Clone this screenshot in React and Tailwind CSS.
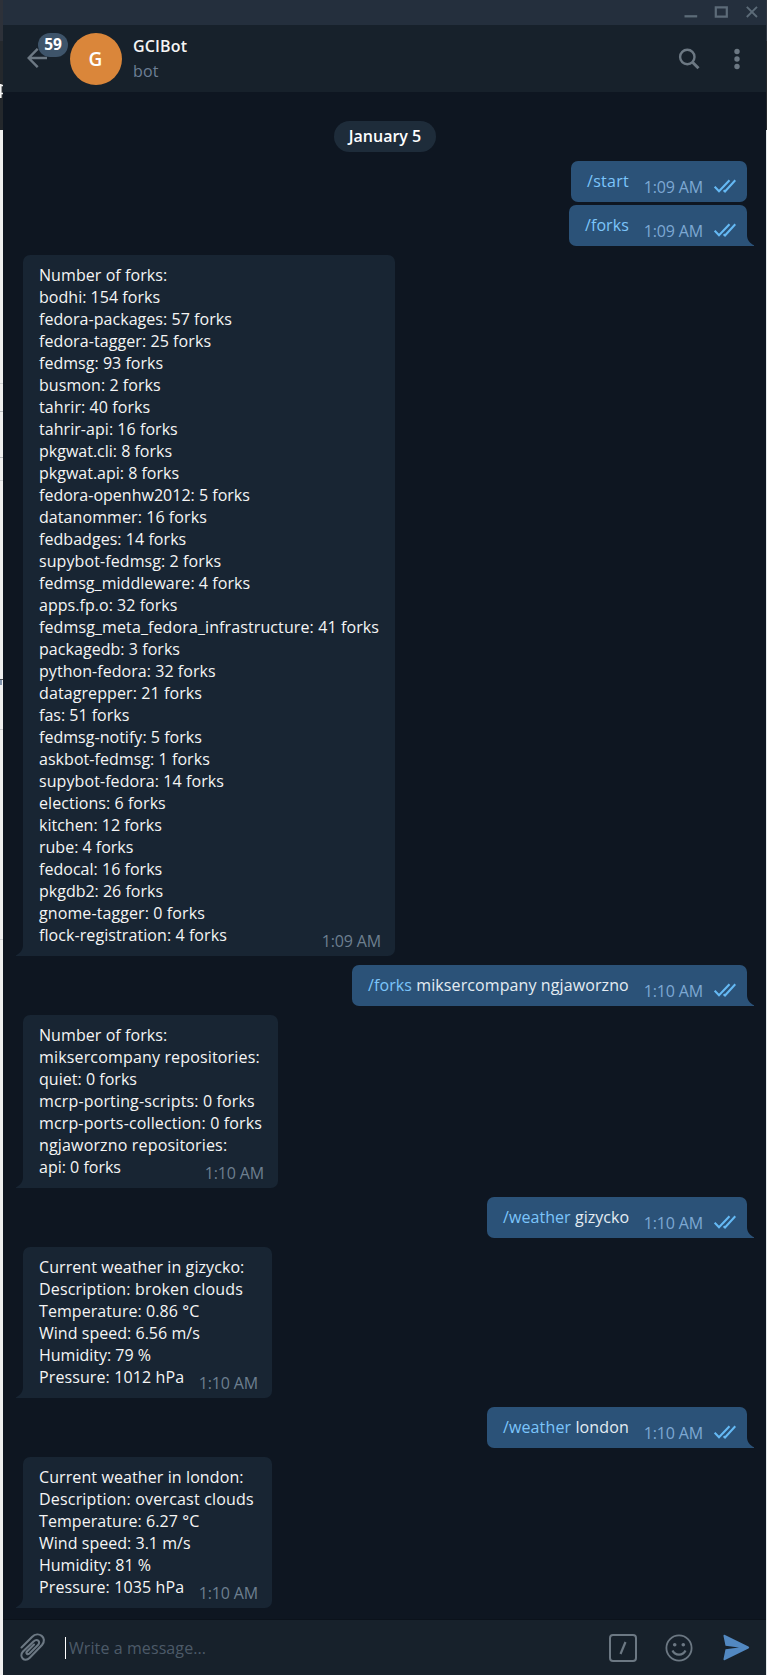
const FORKS = [
  ['Number of forks:', 'tracking-[0.07px]'],
  ['bodhi: 154 forks', 'tracking-[0.03px]'],
  ['fedora-packages: 57 forks', 'tracking-[0.05px]'],
  ['fedora-tagger: 25 forks', 'tracking-[0.08px]'],
  ['fedmsg: 93 forks', 'tracking-[0.03px]'],
  ['busmon: 2 forks', 'tracking-[0.07px]'],
  ['tahrir: 40 forks', 'tracking-[0.08px]'],
  ['tahrir-api: 16 forks', 'tracking-[0.05px]'],
  ['pkgwat.cli: 8 forks', 'tracking-[0px]'],
  ['pkgwat.api: 8 forks', 'tracking-[0px]'],
  ['fedora-openhw2012: 5 forks', 'tracking-[0.01px]'],
  ['datanommer: 16 forks', 'tracking-[0.08px]'],
  ['fedbadges: 14 forks', 'tracking-[0.05px]'],
  ['supybot-fedmsg: 2 forks', 'tracking-[0.09px]'],
  ['fedmsg_middleware: 4 forks', 'tracking-[0.05px]'],
  ['apps.fp.o: 32 forks', 'tracking-[0.04px]'],
  ['fedmsg_meta_fedora_infrastructure: 41 forks', 'tracking-[0.11px]'],
  ['packagedb: 3 forks', 'tracking-[0.05px]'],
  ['python-fedora: 32 forks', 'tracking-[0.05px]'],
  ['datagrepper: 21 forks', 'tracking-[0.1px]'],
  ['fas: 51 forks', 'tracking-[0px]'],
  ['fedmsg-notify: 5 forks', 'tracking-[0.03px]'],
  ['askbot-fedmsg: 1 forks', 'tracking-[0.05px]'],
  ['supybot-fedora: 14 forks', 'tracking-[0.08px]'],
  ['elections: 6 forks', 'tracking-[0.06px]'],
  ['kitchen: 12 forks', 'tracking-[0px]'],
  ['rube: 4 forks', 'tracking-[0px]'],
  ['fedocal: 16 forks', 'tracking-[0.03px]'],
  ['pkgdb2: 26 forks', 'tracking-[0px]'],
  ['gnome-tagger: 0 forks', 'tracking-[0.1px]'],
  ['flock-registration: 4 forks', 'tracking-[0.08px]'],
];
const REPOS = [
  ['Number of forks:', 'tracking-[0.07px]'],
  ['miksercompany repositories:', 'tracking-[0.16px]'],
  ['quiet: 0 forks', 'tracking-[0.03px]'],
  ['mcrp-porting-scripts: 0 forks', 'tracking-[0.15px]'],
  ['mcrp-ports-collection: 0 forks', 'tracking-[0.14px]'],
  ['ngjaworzno repositories:', 'tracking-[0.16px]'],
  ['api: 0 forks', 'tracking-[0px]'],
];
const GIZYCKO = [
  ['Current weather in gizycko:', 'tracking-[0.08px]'],
  ['Description: broken clouds', 'tracking-[0.17px]'],
  ['Temperature: 0.86 °C', 'tracking-[0.07px]'],
  ['Wind speed: 6.56 m/s', 'tracking-[0.03px]'],
  ['Humidity: 79 %', 'tracking-[0px]'],
  ['Pressure: 1012 hPa', 'tracking-[0.11px]'],
];
const LONDON = [
  ['Current weather in london:', 'tracking-[0.1px]'],
  ['Description: overcast clouds', 'tracking-[0.19px]'],
  ['Temperature: 6.27 °C', 'tracking-[0.07px]'],
  ['Wind speed: 3.1 m/s', 'tracking-[0.03px]'],
  ['Humidity: 81 %', 'tracking-[0px]'],
  ['Pressure: 1035 hPa', 'tracking-[0.11px]'],
];

function Incoming({ lines, time, width }) {
  return (
    <div className={`relative ml-5 rounded-[7px] rounded-bl-none bg-[#182533] px-4 pt-[9px] pb-[10px] text-[#f5f5f5] ${width}`}>
      {lines.map(([line, tracking]) => (
        <p key={line} className={`h-[22px] whitespace-nowrap leading-[22px] ${tracking}`}>{line}</p>
      ))}
      <span className="absolute right-[14px] bottom-1 whitespace-nowrap leading-[22px] tracking-[-0.16px] text-[#6d7f8f]">{time}</span>
      <svg className="absolute bottom-0 -left-[7px]" width="7" height="11" viewBox="0 0 7 11">
        <path d="M7 0C7 5 4 8.500 0 10.200V11H7Z" fill="#182533" />
      </svg>
    </div>
  );
}

function Outgoing({ command, args, time, width, tail = true, tracking = 'tracking-[0.08px]' }) {
  return (
    <div className={`relative mr-[19px] flex h-[41px] self-end rounded-[7px] bg-[#2b5278] pt-[9px] pl-4 ${tail ? 'rounded-br-none' : ''} ${width}`}>
      <p className={`flex-1 whitespace-nowrap leading-[22px] text-[#e4ecf2] ${tracking}`}>
        <span className="text-[#7cc5fb]">{command}</span>{args ? ` ${args}` : ''}
      </p>
      <span className="mt-[6px] mr-[11px] whitespace-nowrap leading-[22px] tracking-[-0.16px] text-[#7da8d3]">{time}</span>
      <svg className="mt-[9px] mr-[11px]" width="22" height="14" viewBox="0 0 22 14" fill="none" stroke="#65b9f4" strokeWidth="2.100">
        <path d="M.7 7.700 5 12.200 15.500 1.300M9.600 11.300 11 12.500 21.300 1.300" />
      </svg>
      {tail && (
        <svg className="absolute -right-[7px] bottom-0" width="7" height="11" viewBox="0 0 7 11">
          <path d="M0 0C0 5 3 8.500 7 10.200V11H0Z" fill="#2b5278" />
        </svg>
      )}
    </div>
  );
}

export default function App() {
  return (
    <div className="flex h-[1675px] w-[767px] overflow-hidden font-['Open_Sans',sans-serif] text-[16px]">
      <aside className="flex w-[3px] flex-none flex-col overflow-hidden bg-[#efefef]">
        <div className="h-[41px] flex-none bg-[#2d3139]" />
        <div className="h-[89px] flex-none bg-[#24282c] pt-[43px]">
          <svg width="3" height="14" viewBox="0 0 3 14" fill="none" stroke="#f2f2f2">
            <path d="M.8 0V14" strokeWidth="1.600" />
            <path d="M1 1.500H3M1 9.500H3" strokeWidth="1.500" />
          </svg>
        </div>
        <div className="mt-[253px] h-px flex-none bg-[#d1d3d5]" />
        <div className="mt-[27px] h-px flex-none bg-[#b9bcc0]" />
        <div className="mt-[45px] h-px flex-none bg-[#b9bcc0]" />
        <div className="mt-[22px] h-px flex-none bg-[#d1d3d5]" />
        <div className="mt-[198px] h-px flex-none bg-[#4b5058]" />
        <div className="h-[5px] w-[2px] flex-none bg-[#8194ad]" />
        <div className="mt-[44px] h-px flex-none bg-[#c8cacc]" />
        <div className="mt-[209px] h-px flex-none bg-[#d1d3d5]" />
      </aside>

      <main className="flex w-[763px] flex-none flex-col bg-[#0e1621]">
        <div className="flex h-[25px] flex-none items-center justify-end bg-[#242f3d] pr-2">
          <svg width="76" height="25" viewBox="0 0 76 25" fill="none" stroke="#5c6b78" strokeWidth="2">
            <path d="M2.500 16.300H15.200" strokeWidth="2.300" />
            <path d="M33.800 7.300H44.800V16.700H33.800Z" strokeWidth="2.200" />
            <path d="M64.800 6.800 75 17M75 6.800 64.800 17" strokeWidth="1.900" />
          </svg>
        </div>

        <header className="flex h-[67px] flex-none items-center bg-[#17212b]">
          <div className="relative ml-6 h-[52px] w-[43px]">
            <svg className="absolute top-[15px] left-0" width="20" height="20" viewBox="0 0 20 20" fill="none" stroke="#6c7883" strokeWidth="2.400">
              <path d="M20 10H1.700M10.700 .8 1.700 10 10.700 19.200" />
            </svg>
            <span className="absolute top-0 left-[11px] flex h-6 w-[30px] items-center justify-center rounded-full bg-[#3e546a] pt-px text-[15.500px] font-bold text-white">59</span>
          </div>
          <div className="flex size-[52px] items-center justify-center rounded-full bg-[#da863a] pt-[2px] pr-px text-[19px] font-semibold text-white">G</div>
          <div className="ml-[11px] flex-1">
            <h1 className="leading-[25px] font-semibold tracking-[0.15px] text-[#f5f5f5]">GCIBot</h1>
            <p className="leading-[25px] tracking-[0.2px] text-[#6d7f95]">bot</p>
          </div>
          <svg className="mr-[34px]" width="22" height="22" viewBox="0 0 22 22" fill="none" stroke="#6c7883" strokeWidth="2.400">
            <circle cx="9.300" cy="9" r="7.200" />
            <path d="M14.500 14.200 20.500 20.200" strokeWidth="3" />
          </svg>
          <svg className="mr-[26px]" width="6" height="22" viewBox="0 0 6 22" fill="#6c7883">
            <circle cx="3" cy="3.500" r="2.700" />
            <circle cx="3" cy="11" r="2.700" />
            <circle cx="3" cy="18.500" r="2.700" />
          </svg>
        </header>

        <section className="flex flex-1 flex-col items-start pt-[29px]">
          <div className="mb-[9px] flex h-[31px] w-[102px] items-center justify-center self-center rounded-full bg-[#1e2c3a] pb-[2px] pl-px font-semibold text-white">January 5</div>
          <div className="flex w-full flex-col items-start gap-[9px]">
            <div className="flex w-full flex-col gap-[3px]">
              <Outgoing command="/start" time="1:09 AM" width="w-[176px]" tail={false} tracking="tracking-[0.3px]" />
              <Outgoing command="/forks" time="1:09 AM" width="w-[178px]" />
            </div>
            <Incoming lines={FORKS} time="1:09 AM" width="w-[372px]" />
            <Outgoing command="/forks" args="miksercompany ngjaworzno" time="1:10 AM" width="w-[395px]" tracking="tracking-[0.1px]" />
            <Incoming lines={REPOS} time="1:10 AM" width="w-[255px]" />
            <Outgoing command="/weather" args="gizycko" time="1:10 AM" width="w-[260px]" tracking="tracking-[0.06px]" />
            <Incoming lines={GIZYCKO} time="1:10 AM" width="w-[249px]" />
            <Outgoing command="/weather" args="london" time="1:10 AM" width="w-[260px]" tracking="tracking-[0.12px]" />
            <Incoming lines={LONDON} time="1:10 AM" width="w-[249px]" />
          </div>
        </section>

        <footer className="flex h-[56px] flex-none items-center border-t border-[#0b121b] bg-[#17212b]">
          <svg className="ml-[17px]" width="27" height="29" viewBox="0 0 27 29" fill="none" stroke="#6c7883" strokeWidth="2.100" strokeLinecap="round">
            <path d="M1.500 14.500 12 4C18.500-2.500 28 5 22 12L9.500 25C4.500 30 -1.500 23.500 3 18.500L13.500 8.500C17.500 5 21 9 18 12L9.500 20.500C7.500 22 5.500 20.500 7 18.500L14 11.500" />
          </svg>
          <span className="ml-[18px] h-[22px] w-px bg-white" />
          <span className="ml-[3px] flex-1 leading-[22px] tracking-[0.09px] text-[#4c5a68]">Write a message...</span>
          <svg className="mr-[28px]" width="28" height="28" viewBox="0 0 28 28" fill="none" stroke="#6c7883" strokeWidth="2">
            <rect x="1" y="1" width="26" height="26" rx="3" />
            <path d="M16.500 8 11.500 20" strokeWidth="2.200" />
          </svg>
          <svg className="mr-[30px]" width="28" height="28" viewBox="0 0 28 28" fill="none" stroke="#6c7883" strokeWidth="1.800">
            <circle cx="14" cy="14" r="12.600" />
            <circle cx="9.700" cy="10.800" r="1.800" fill="#6c7883" stroke="none" />
            <circle cx="18.300" cy="10.800" r="1.800" fill="#6c7883" stroke="none" />
            <path d="M7.500 16.500C10 22 18 22 20.500 16.500" strokeWidth="2.200" />
          </svg>
          <svg className="mr-[16px]" width="27" height="27" viewBox="0 0 27 27" fill="#5288c1">
            <path d="M1.500.8 25.500 12.500Q27 13.500 25.500 14.500L1.500 26.200Q.4 26.500.5 25L2.500 15.300 16 13.500 2.500 11.700.5 2Q.4.500 1.500.8Z" />
          </svg>
        </footer>
      </main>
      <aside className="flex w-px flex-none flex-col bg-[#e3e8ea]">
        <div className="h-[41px] bg-[#303741]" />
        <div className="h-[89px] bg-[#24282c]" />
      </aside>
    </div>
  );
}
